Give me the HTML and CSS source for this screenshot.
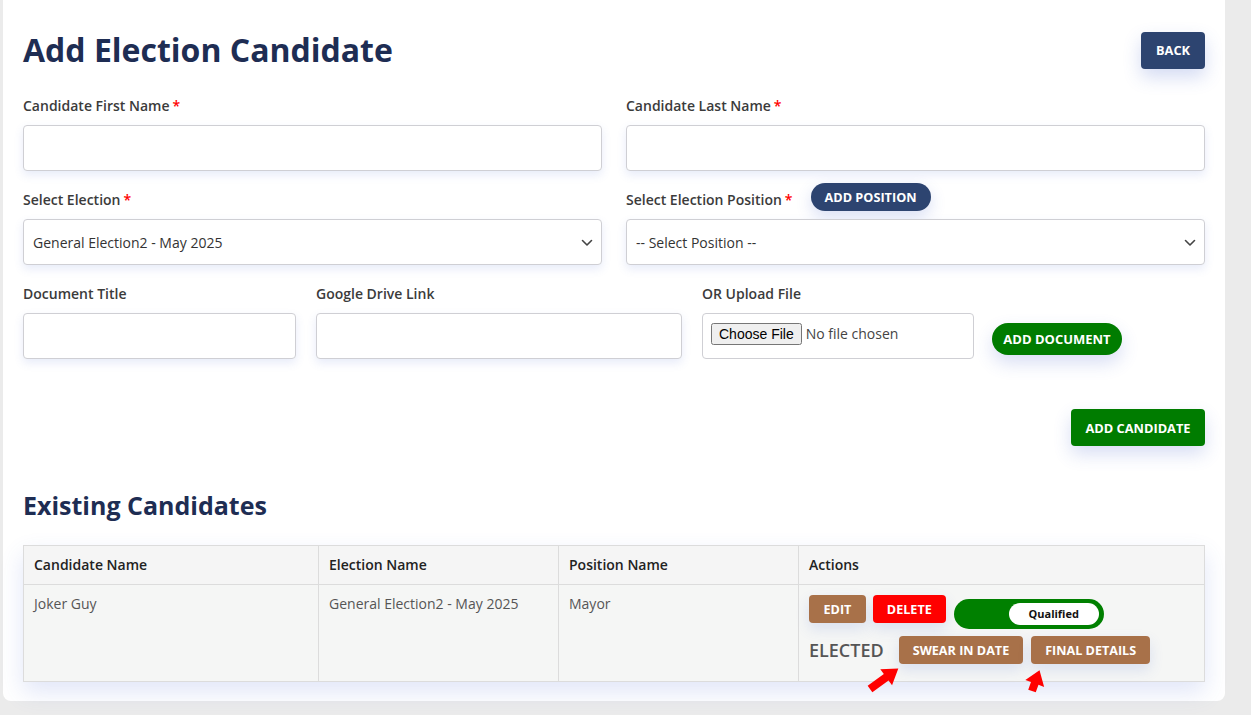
FILE: index.html
```html
<!DOCTYPE html>
<html lang="en">
<head>
<meta charset="utf-8">
<title>Add Election Candidate</title>
<link rel="stylesheet" href="styles.css">
</head>
<body>
<main class="card">
  <div class="title-row">
    <h1 class="title">Add Election Candidate</h1>
    <button class="btn btn-navy btn-back">BACK</button>
  </div>

  <div class="grid-2">
    <div class="field">
      <div class="label-row"><label class="label">Candidate First Name<span class="req">*</span></label></div>
      <input class="input" type="text">
    </div>
    <div class="field">
      <div class="label-row"><label class="label">Candidate Last Name<span class="req">*</span></label></div>
      <input class="input" type="text">
    </div>
  </div>

  <div class="grid-2 row-gap">
    <div class="field">
      <div class="label-row"><label class="label">Select Election<span class="req">*</span></label></div>
      <div class="select-wrap">
        <select class="input select"><option>General Election2 - May 2025</option></select>
        <svg class="chevron" width="12" height="8" viewBox="0 0 12 8"><path d="M1.5 1.5 L6 6 L10.5 1.5" fill="none" stroke="#444" stroke-width="1.6" stroke-linecap="round" stroke-linejoin="round"/></svg>
      </div>
    </div>
    <div class="field">
      <div class="label-row"><label class="label">Select Election Position<span class="req">*</span></label><button class="pill pill-navy add-pos">ADD POSITION</button></div>
      <div class="select-wrap">
        <select class="input select"><option>-- Select Position --</option></select>
        <svg class="chevron" width="12" height="8" viewBox="0 0 12 8"><path d="M1.5 1.5 L6 6 L10.5 1.5" fill="none" stroke="#444" stroke-width="1.6" stroke-linecap="round" stroke-linejoin="round"/></svg>
      </div>
    </div>
  </div>

  <div class="doc-row row-gap">
    <div class="field">
      <div class="label-row"><label class="label">Document Title</label></div>
      <input class="input" type="text">
    </div>
    <div class="field">
      <div class="label-row"><label class="label">Google Drive Link</label></div>
      <input class="input" type="text">
    </div>
    <div class="field">
      <div class="label-row"><label class="label">OR Upload File</label></div>
      <div class="input file-box"><input class="file" type="file"></div>
    </div>
    <div class="doc-btn-cell">
      <button class="pill pill-green add-doc">ADD DOCUMENT</button>
    </div>
  </div>

  <div class="submit-row">
    <button class="btn btn-green add-cand">ADD CANDIDATE</button>
  </div>

  <h2 class="subtitle">Existing Candidates</h2>

  <table class="table">
    <thead>
      <tr>
        <th class="c1">Candidate Name</th>
        <th class="c2">Election Name</th>
        <th class="c3">Position Name</th>
        <th>Actions</th>
      </tr>
    </thead>
    <tbody>
      <tr>
        <td>Joker Guy</td>
        <td>General Election2 - May 2025</td>
        <td>Mayor</td>
        <td class="actions">
          <div class="act-line">
            <button class="btn-sm btn-brown">EDIT</button>
            <button class="btn-sm btn-red">DELETE</button>
            <div class="toggle"><span class="toggle-knob">Qualified</span></div>
          </div>
          <div class="act-line line2">
            <span class="elected">ELECTED</span>
            <button class="btn-sm btn-brown">SWEAR IN DATE</button>
            <button class="btn-sm btn-brown">FINAL DETAILS</button>
          </div>
        </td>
      </tr>
    </tbody>
  </table>
</main>

<svg class="annotations" width="1251" height="715" viewBox="0 0 1251 715">
  <polygon transform="translate(870 689) rotate(-36)" points="0,-4 20,-4 20,-10 35,0 20,10 20,4 0,4" fill="#ff0000"/>
  <polygon transform="translate(1032 691) rotate(-70)" points="0,-4 8,-4 8,-10 22,0 8,10 8,4 0,4" fill="#ff0000"/>
</svg>
</body>
</html>
```

FILE: styles.css
```css
* { box-sizing: border-box; }

html, body {
  margin: 0;
  padding: 0;
}

body {
  background: #ebebeb;
  font-family: "Open Sans", "Noto Sans", sans-serif;
  color: #333;
  width: 1251px;
  height: 715px;
  overflow: hidden;
  position: relative;
}

.card {
  margin-left: 3px;
  width: 1222px;
  height: 701px;
  background: #ffffff;
  border-radius: 0 0 8px 8px;
  padding: 30px 20px 20px 20px;
}

.title-row {
  display: flex;
  justify-content: space-between;
  align-items: center;
  height: 40px;
}

.title {
  margin: 0;
  font-size: 32px;
  line-height: 40px;
  font-weight: 700;
  color: #1e2d53;
}

.btn {
  border: none;
  border-radius: 4px;
  font-family: "Open Sans", sans-serif;
  font-weight: 700;
  font-size: 12.8px;
  color: #fff;
  cursor: pointer;
}

.btn-navy {
  background: #2d4470;
  box-shadow: 0 8px 18px rgba(60, 90, 200, 0.22);
}

.btn-back {
  width: 64px;
  height: 37px;
  padding: 0;
}

.grid-2 {
  display: grid;
  grid-template-columns: 1fr 1fr;
  column-gap: 24px;
  margin-top: 25px;
}

.row-gap { margin-top: 18px; }

.field {
  display: flex;
  flex-direction: column;
}

.label-row {
  display: flex;
  align-items: flex-end;
  height: 21px;
  margin-bottom: 9px;
}

.label {
  font-size: 14px;
  font-weight: 600;
  line-height: 20px;
  color: #3b3b3b;
}

.req {
  color: #ff0000;
  margin-left: 3px;
}

.input {
  height: 46px;
  width: 100%;
  border: 1px solid #cfcfd4;
  border-radius: 4px;
  background: #fff;
  box-shadow: 0 4px 10px rgba(70, 100, 210, 0.13);
  font-family: "Open Sans", sans-serif;
  font-size: 14px;
  color: #333;
  margin: 0;
  padding: 0 9px;
}

.select-wrap {
  position: relative;
}

.select {
  appearance: none;
  -webkit-appearance: none;
  outline: none;
}

.chevron {
  position: absolute;
  right: 9px;
  top: 20px;
}

.pill {
  border: none;
  border-radius: 16px;
  font-family: "Open Sans", sans-serif;
  font-weight: 700;
  font-size: 12.7px;
  color: #fff;
  padding: 0;
}

.pill-navy {
  background: #2d4470;
  box-shadow: 0 6px 16px rgba(60, 90, 200, 0.2);
}

.add-pos {
  width: 120px;
  height: 28px;
  margin-left: 18px;
  align-self: center;
  margin-top: -5px;
  flex-shrink: 0;
}

.doc-row {
  display: grid;
  grid-template-columns: 273px 366px 272px auto;
  column-gap: 20px;
}

.file-box {
  display: flex;
  align-items: flex-start;
  padding: 9px 8px;
  box-shadow: none;
}

.file {
  font-family: "Open Sans", sans-serif;
  font-size: 14px;
  color: #444;
}

.doc-btn-cell {
  display: flex;
  align-items: center;
  padding-top: 35px;
  margin-left: -2px;
}

.pill-green {
  background: #007c00;
  box-shadow: 0 8px 18px rgba(60, 90, 200, 0.2);
}

.add-doc {
  width: 130px;
  height: 32px;
  font-size: 13px;
}

.submit-row {
  display: flex;
  justify-content: flex-end;
  margin-top: 50px;
}

.btn-green {
  background: #007c00;
  box-shadow: 0 8px 18px rgba(60, 90, 200, 0.2);
}

.add-cand {
  width: 134px;
  height: 37px;
  padding: 0;
}

.subtitle {
  margin: 43px 0 0 0;
  font-size: 25px;
  line-height: 32px;
  font-weight: 700;
  color: #1e2d53;
}

.table {
  margin-top: 24px;
  width: 1182px;
  border-collapse: collapse;
  background: #f5f6f5;
  box-shadow: 0 10px 22px rgba(70, 100, 210, 0.16);
  font-size: 14px;
}

.table th, .table td {
  border: 1px solid #dcdcdc;
  text-align: left;
  vertical-align: top;
  padding: 9px 10px;
  line-height: 20px;
}

.table th {
  font-weight: 600;
  color: #222;
  background: #f5f5f5;
}

.table td {
  color: #555;
  padding: 9px 10px;
  height: 97px;
}

.c1 { width: 295px; }
.c2 { width: 240px; }
.c3 { width: 240px; }

.table td.actions {
  padding: 10px 10px 16px 10px;
}

.act-line {
  display: flex;
  align-items: flex-start;
  gap: 7px;
}

.line2 {
  margin-top: 7px;
  align-items: center;
  gap: 8px;
}

.btn-sm {
  border: none;
  border-radius: 4px;
  height: 28px;
  padding: 0 14px;
  font-family: "Open Sans", sans-serif;
  font-weight: 700;
  font-size: 12.6px;
  color: #fff;
  box-shadow: 0 6px 14px rgba(70, 100, 210, 0.15);
}

.btn-brown { background: #a87149; }
.btn-red { background: #ff0000; }

.btn-sm:first-child { padding: 0 14.5px; }

.toggle {
  margin-left: 1px;
  margin-top: 4px;
  width: 150px;
  height: 30px;
  border-radius: 15px;
  background: #008000;
  display: flex;
  justify-content: flex-end;
  align-items: center;
  padding: 0 5px;
}

.toggle-knob {
  width: 90px;
  height: 22px;
  border-radius: 11px;
  background: #fff;
  color: #111;
  font-size: 11px;
  font-weight: 700;
  display: flex;
  align-items: center;
  justify-content: center;
}

.elected {
  font-size: 18px;
  font-weight: 600;
  color: #555;
  margin-right: 7px;
  line-height: 26px;
}

.annotations {
  position: absolute;
  left: 0;
  top: 0;
  pointer-events: none;
}
```
